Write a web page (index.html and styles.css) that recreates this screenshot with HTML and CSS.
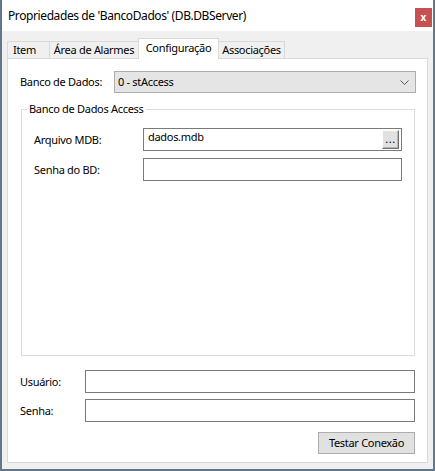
FILE: index.html
```html
<!DOCTYPE html>
<html lang="pt">
<head>
<meta charset="utf-8">
<title>Propriedades</title>
<link rel="stylesheet" href="styles.css">
</head>
<body>
<div class="window">
  <div class="titlebar">
    <span class="title">Propriedades de 'BancoDados' (DB.DBServer)</span>
    <div class="close">x</div>
  </div>
  <div class="client">
    <div class="tabs">
      <div class="tab tab-item">Item</div>
      <div class="tab tab-alarm">Área de Alarmes</div>
      <div class="tab tab-config active">Configuração</div>
      <div class="tab tab-assoc">Associações</div>
    </div>
    <div class="panel">
      <div class="row row-db">
        <span class="lbl lbl-db">Banco de Dados:</span>
        <div class="combo">
          <span class="combo-text">0 - stAccess</span>
          <svg class="chev" width="9" height="5" viewBox="0 0 9 5"><polyline points="0.5,0.5 4.5,4.5 8.5,0.5" fill="none" stroke="#5a5a5a" stroke-width="1"/></svg>
        </div>
      </div>
      <fieldset class="group">
        <legend class="legend">Banco de Dados Access</legend>
        <div class="row row-in">
          <span class="lbl lbl-g">Arquivo MDB:</span>
          <div class="input"><span class="input-text">dados.mdb</span><span class="dots">...</span></div>
        </div>
        <div class="row row-in row-gap">
          <span class="lbl lbl-g">Senha do BD:</span>
          <div class="input"></div>
        </div>
      </fieldset>
      <div class="row row-in row-user">
        <span class="lbl lbl-u">Usuário:</span>
        <div class="input"></div>
      </div>
      <div class="row row-in row-pass">
        <span class="lbl lbl-u">Senha:</span>
        <div class="input"></div>
      </div>
      <div class="actions">
        <div class="btn">Testar Conexão</div>
      </div>
    </div>
  </div>
</div>
</body>
</html>
```
FILE: styles.css
```css
html, body {
  margin: 0;
  padding: 0;
  background: #f0f0f0;
}
body {
  font-family: "Noto Sans", "Open Sans", sans-serif;
  font-size: 11px;
  letter-spacing: -0.3px;
  color: #000;
}
.window {
  width: 435px;
  height: 471px;
  box-sizing: border-box;
  border: 2px solid #62788a;
  border-top: 0;
  display: flex;
  flex-direction: column;
  background: #f0f0f0;
}
.titlebar {
  height: 31px;
  flex: none;
  background: #fff;
  display: flex;
  justify-content: space-between;
  align-items: flex-start;
  padding-left: 6px;
}
.title {
  font-size: 12px;
  letter-spacing: -0.4px;
  line-height: 16px;
  margin-top: 8px;
}
.close {
  width: 17px;
  height: 19px;
  margin-top: 8px;
  margin-right: 1px;
  background: #c75050;
  color: #fff;
  font-weight: bold;
  font-size: 10px;
  letter-spacing: 0;
  line-height: 18px;
  text-align: center;
}
.client {
  flex: 1;
  display: flex;
  flex-direction: column;
  padding: 7px 5px 6px 5px;
}
.tabs {
  display: flex;
  align-items: flex-end;
  height: 20px;
  flex: none;
  position: relative;
  z-index: 1;
}
.tab {
  box-sizing: border-box;
  height: 17px;
  border: 1px solid #d9d9d9;
  border-bottom: 0;
  margin-left: -1px;
  background: #f0f0f0;
  text-align: center;
  line-height: 15px;
  white-space: nowrap;
}
.tab-item { width: 43px; margin-left: 0; text-align: left; padding-left: 5px; }
.tab-alarm { width: 90px; }
.tab-config { width: 81px; }
.tab-assoc { width: 67px; }
.tab.active {
  height: 21px;
  margin-bottom: -1px;
  background: #fff;
  line-height: 18px;
  position: relative;
  z-index: 2;
}
.panel {
  flex: 1;
  background: #fff;
  border: 1px solid #d9d9d9;
  padding: 12px 11px 8px 12px;
  display: flex;
  flex-direction: column;
}
.row {
  display: flex;
  align-items: center;
}
.lbl {
  flex: none;
  line-height: 14px;
}
.lbl-db { width: 94px; }
.lbl-g { width: 109px; }
.lbl-u { width: 65px; }
.combo {
  flex: 1;
  height: 22px;
  box-sizing: border-box;
  border: 1px solid #adadad;
  background: #e5e5e5;
  display: flex;
  align-items: center;
  justify-content: space-between;
  padding: 0 6px 0 3px;
}
.combo-text { line-height: 14px; }
.chev { display: block; }
.group {
  flex: 1;
  margin: 9px 1px 0 1px;
  border: 1px solid #dcdcdc;
  padding: 12px 12px 0 12px;
  min-width: 0;
}
.legend {
  margin-left: -7px;
  padding: 0 2px;
  line-height: 14px;
}
.input {
  flex: 1;
  height: 23px;
  box-sizing: border-box;
  border: 1px solid #7a7a7a;
  background: #fff;
  display: flex;
  justify-content: space-between;
  align-items: flex-start;
}
.input-text {
  padding: 1px 0 0 4px;
  line-height: 14px;
}
.dots {
  width: 17px;
  height: 19px;
  box-sizing: border-box;
  margin: 1px 2px 0 0;
  background: #e1e1e1;
  border: 1px solid;
  border-color: #fdfdfd #707070 #707070 #fdfdfd;
  box-shadow: inset -1px -1px 0 #b5b5b5;
  text-align: center;
  line-height: 16px;
  letter-spacing: 0.5px;
}
.row-gap { margin-top: 7px; }
.row-user { margin-top: 14px; margin-right: 1px; }
.row-pass { margin-top: 6px; margin-right: 1px; }
.actions {
  display: flex;
  justify-content: flex-end;
  margin-top: 10px;
  margin-right: 1px;
}
.btn {
  width: 97px;
  height: 22px;
  box-sizing: border-box;
  border: 1px solid #adadad;
  background: #e1e1e1;
  text-align: center;
  line-height: 19px;
}
```
